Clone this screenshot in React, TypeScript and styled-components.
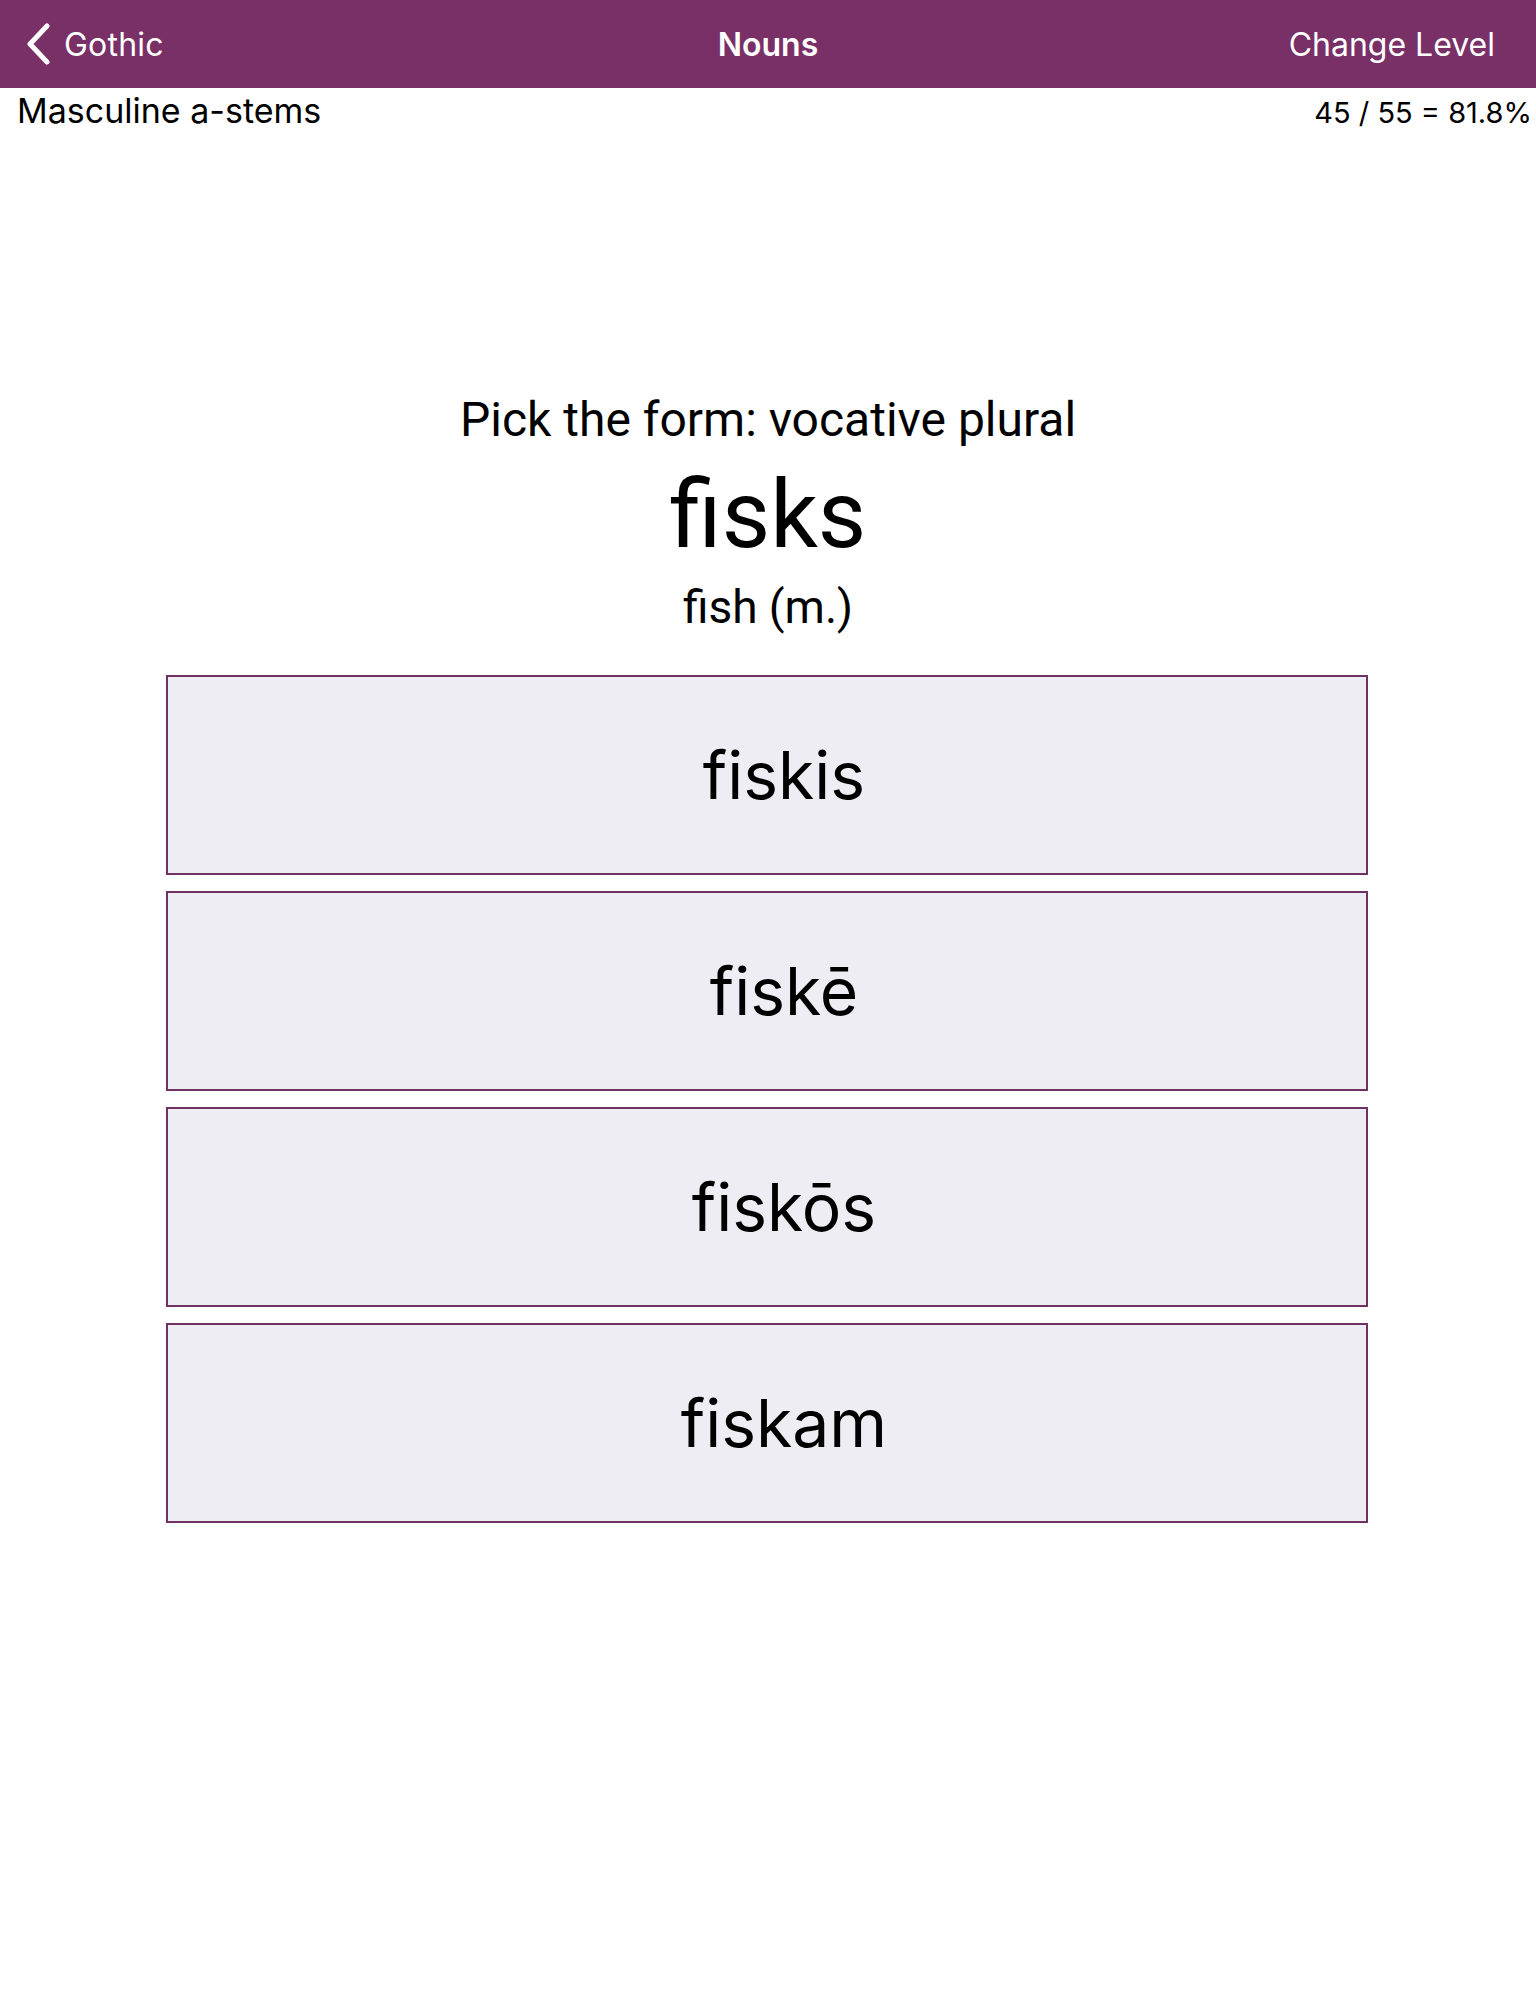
import type { FC } from 'react';
import styled, { createGlobalStyle } from 'styled-components';

const GlobalStyle = createGlobalStyle`
	html, body {
		margin: 0;
		padding: 0;
		background: #ffffff;
	}
	body {
		font-family: Inter, 'Noto Sans', sans-serif;
		color: #000000;
	}
`;

const choices = ['fiskis', 'fiskē', 'fiskōs', 'fiskam'];

const App: FC = () => {
	return (
		<Page>
			<GlobalStyle />
			<NavBar>
				<BackLink>
					<svg width="26" height="42" viewBox="0 0 26 42" fill="none">
						<path
							d="M22 3 L5 21 L22 39"
							stroke="#ffffff"
							strokeWidth="5"
							strokeLinecap="round"
							strokeLinejoin="round"
						/>
					</svg>
					<span>Gothic</span>
				</BackLink>
				<Title>Nouns</Title>
				<NavAction>Change Level</NavAction>
			</NavBar>
			<InfoRow>
				<Category>Masculine a-stems</Category>
				<Score>45 / 55 = 81.8%</Score>
			</InfoRow>
			<Question>
				<Prompt>Pick the form: vocative plural</Prompt>
				<Lemma>fisks</Lemma>
				<Gloss>fish (m.)</Gloss>
			</Question>
			<Choices>
				{choices.map((c) => (
					<ChoiceButton key={c}>{c}</ChoiceButton>
				))}
			</Choices>
		</Page>
	);
};

export default App;

const Page = styled.div`
	width: 1536px;
	min-height: 2008px;
	background: #ffffff;
`;

const NavBar = styled.header`
	height: 88px;
	background: #793067;
	display: grid;
	grid-template-columns: 1fr auto 1fr;
	align-items: center;
	padding: 0 25px;
	color: #ffffff;
	font-size: 32px;
`;

const BackLink = styled.a`
	display: flex;
	align-items: center;
	gap: 13px;
	color: #ffffff;
	justify-self: start;
	letter-spacing: 0.2px;
`;

const Title = styled.div`
	font-weight: 600;
	font-size: 32px;
`;

const NavAction = styled.a`
	justify-self: end;
	margin-right: 16px;
	color: #ffffff;
`;

const InfoRow = styled.div`
	display: flex;
	justify-content: space-between;
	align-items: baseline;
	padding: 0 4px 0 17px;
	height: 46px;
`;

const Category = styled.div`
	font-size: 34px;
	line-height: 46px;
`;

const Score = styled.div`
	font-size: 29px;
	line-height: 46px;
`;

const Question = styled.section`
	display: flex;
	flex-direction: column;
	align-items: center;
	margin-top: 258px;
	font-family: Roboto, 'Noto Sans', sans-serif;
`;

const Prompt = styled.div`
	font-size: 48px;
	line-height: 56px;
`;

const Lemma = styled.div`
	font-size: 94px;
	line-height: 110px;
	margin-top: 12px;
`;

const Gloss = styled.div`
	font-size: 46px;
	line-height: 58px;
	margin-top: 8px;
`;

const Choices = styled.div`
	display: flex;
	flex-direction: column;
	gap: 16px;
	width: 1202px;
	margin: 39px 0 0 166px;
`;

const ChoiceButton = styled.button`
	height: 200px;
	box-sizing: border-box;
	border: 2px solid #6e3363;
	background: #efedf4;
	font-family: Inter, 'Noto Sans', sans-serif;
	font-size: 66px;
	color: #000000;
	padding: 0 0 0 34px;
	display: flex;
	align-items: center;
	justify-content: center;
	cursor: pointer;
`;
